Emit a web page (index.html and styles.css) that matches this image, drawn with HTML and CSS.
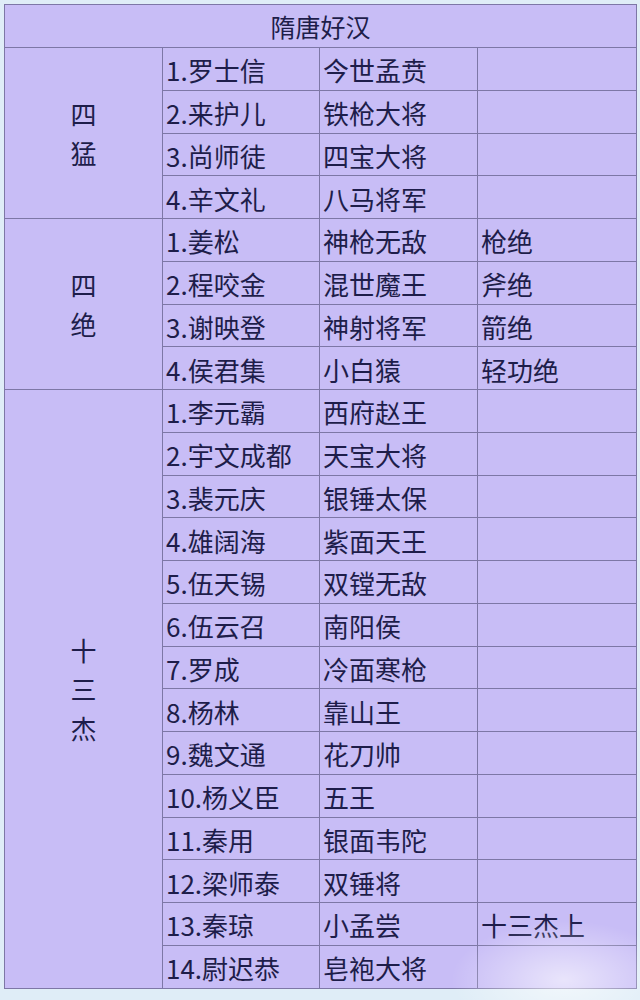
FILE: index.html
```html
<!DOCTYPE html>
<html lang="zh-CN">
<head>
<meta charset="utf-8">
<title>隋唐好汉</title>
<link rel="stylesheet" href="styles.css">
</head>
<body>
<div class="wrap">
<table class="heroes">
  <colgroup>
    <col class="c1"><col class="c2"><col class="c3"><col class="c4">
  </colgroup>
  <tr class="head"><td colspan="4">隋唐好汉</td></tr>
  <tr><td class="group" rowspan="4"><span>四</span><span>猛</span></td><td>1.罗士信</td><td>今世孟贲</td><td></td></tr>
  <tr><td>2.来护儿</td><td>铁枪大将</td><td></td></tr>
  <tr><td>3.尚师徒</td><td>四宝大将</td><td></td></tr>
  <tr><td>4.辛文礼</td><td>八马将军</td><td></td></tr>
  <tr><td class="group" rowspan="4"><span>四</span><span>绝</span></td><td>1.姜松</td><td>神枪无敌</td><td>枪绝</td></tr>
  <tr><td>2.程咬金</td><td>混世魔王</td><td>斧绝</td></tr>
  <tr><td>3.谢映登</td><td>神射将军</td><td>箭绝</td></tr>
  <tr><td>4.侯君集</td><td>小白猿</td><td>轻功绝</td></tr>
  <tr><td class="group" rowspan="14"><span>十</span><span>三</span><span>杰</span></td><td>1.李元霸</td><td>西府赵王</td><td></td></tr>
  <tr><td>2.宇文成都</td><td>天宝大将</td><td></td></tr>
  <tr><td>3.裴元庆</td><td>银锤太保</td><td></td></tr>
  <tr><td>4.雄阔海</td><td>紫面天王</td><td></td></tr>
  <tr><td>5.伍天锡</td><td>双镗无敌</td><td></td></tr>
  <tr><td>6.伍云召</td><td>南阳侯</td><td></td></tr>
  <tr><td>7.罗成</td><td>冷面寒枪</td><td></td></tr>
  <tr><td>8.杨林</td><td>靠山王</td><td></td></tr>
  <tr><td>9.魏文通</td><td>花刀帅</td><td></td></tr>
  <tr><td>10.杨义臣</td><td>五王</td><td></td></tr>
  <tr><td>11.秦用</td><td>银面韦陀</td><td></td></tr>
  <tr><td>12.梁师泰</td><td>双锤将</td><td></td></tr>
  <tr><td>13.秦琼</td><td>小孟尝</td><td>十三杰上</td></tr>
  <tr><td>14.尉迟恭</td><td>皂袍大将</td><td></td></tr>
</table>
<div class="mark"></div>
</div>
</body>
</html>
```

FILE: styles.css
```css
html, body {
  margin: 0;
  padding: 0;
}
body {
  background: #dfedf7;
  font-family: "Noto Sans CJK SC", "Noto Sans", sans-serif;
  color: #1e1d4a;
}
.wrap {
  position: relative;
  width: 640px;
  height: 1000px;
  padding: 4px 0 0 4px;
  box-sizing: border-box;
}
.heroes {
  border-collapse: collapse;
  table-layout: fixed;
  width: 632px;
  background: #c8bdf6;
  font-size: 26px;
  line-height: 1;
}
.c1 { width: 158px; }
.c2 { width: 157px; }
.c3 { width: 158px; }
.c4 { width: 159px; }
.heroes td {
  border: 1px solid #7d77a6;
  height: 42.75px;
  padding: 3px 0 0 3px;
  box-sizing: border-box;
  white-space: nowrap;
  overflow: hidden;
  vertical-align: middle;
}
.heroes tr.head td {
  height: 43px;
  text-align: center;
  padding: 0;
  font-size: 25px;
}
.heroes td.group {
  text-align: center;
  padding: 0;
}
.group span {
  display: block;
  line-height: 39px;
}
.mark {
  position: absolute;
  right: 0;
  bottom: 0;
  width: 190px;
  height: 80px;
  background: radial-gradient(ellipse at 60% 75%, rgba(255,255,255,0.6), rgba(255,255,255,0) 70%);
  pointer-events: none;
}
```
